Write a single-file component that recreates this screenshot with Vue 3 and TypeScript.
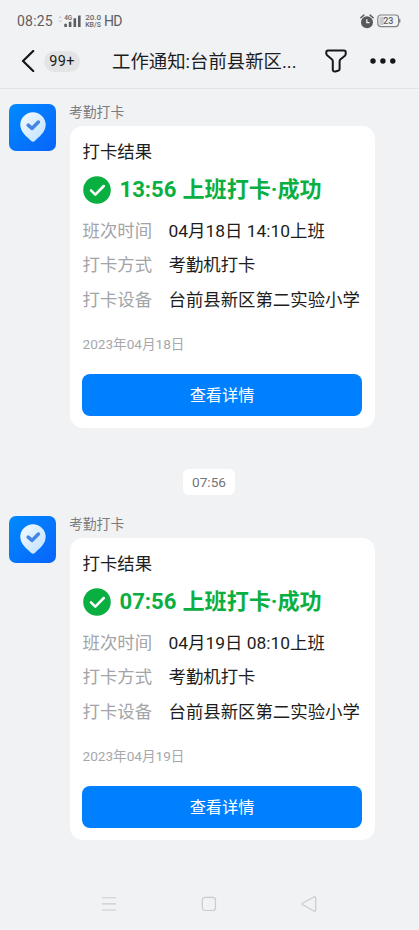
<script setup lang="ts">
interface Field {
  label: string
  value: string
}

interface Notice {
  id: number
  sender: string
  time: string
  fields: Field[]
  date: string
}

const notices: Notice[] = [
  {
    id: 1,
    sender: '考勤打卡',
    time: '13:56',
    fields: [
      { label: '班次时间', value: '04月18日 14:10上班' },
      { label: '打卡方式', value: '考勤机打卡' },
      { label: '打卡设备', value: '台前县新区第二实验小学' },
    ],
    date: '2023年04月18日',
  },
  {
    id: 2,
    sender: '考勤打卡',
    time: '07:56',
    fields: [
      { label: '班次时间', value: '04月19日 08:10上班' },
      { label: '打卡方式', value: '考勤机打卡' },
      { label: '打卡设备', value: '台前县新区第二实验小学' },
    ],
    date: '2023年04月19日',
  },
]
</script>

<template>
  <div class="screen">
    <div class="status">
      <span class="clock">08:25</span>
      <svg class="signal" width="44" height="16" viewBox="0 0 44 16">
        <path d="M1 5.2L2.3 3.5L3.6 5.2M1 7.4L2.3 9L3.6 7.4" fill="none" stroke="#c2c3c5" stroke-width="1" />
        <text x="6.2" y="7.2" class="tiny" textLength="8" lengthAdjust="spacingAndGlyphs">4G</text>
        <path d="M7.6 10.7v3.3M12.1 8.8v5.2M16.8 5.2v8.8M21.3 2.4v11.6" stroke="#5d5e61" stroke-width="2.6" />
        <text x="27.2" y="7.2" class="tiny" textLength="15.8" lengthAdjust="spacingAndGlyphs">20.0</text>
        <text x="27.2" y="14" class="tiny" textLength="15.8" lengthAdjust="spacingAndGlyphs">KB/S</text>
      </svg>
      <span class="hd">HD</span>
      <svg class="alarm" width="14" height="15" viewBox="0 0 14 15">
        <circle cx="7" cy="8.2" r="6" fill="#58595c" />
        <path d="M.8 3.8L3.9 1.1M13.2 3.8L10.1 1.1" stroke="#58595c" stroke-width="1.4" stroke-linecap="round" />
        <path d="M6.8 5.2v3.5H9.6" fill="none" stroke="#f1f2f4" stroke-width="1.3" />
      </svg>
      <svg class="battery" width="24" height="14" viewBox="0 0 24 14">
        <rect x=".8" y="1" width="20.8" height="11.6" rx="3" fill="none" stroke="#818285" stroke-width="1.2" />
        <rect x="2.5" y="2.7" width="4.2" height="8.2" rx="1" fill="#c9cacd" />
        <path d="M22.7 5v3.6" stroke="#818285" stroke-width="1.4" />
        <text x="11.3" y="10" text-anchor="middle" class="level">23</text>
      </svg>
    </div>

    <header class="nav">
      <svg class="back" width="14" height="22" viewBox="0 0 14 22">
        <path d="M12.2 1L2 11L12.2 21" fill="none" stroke="#151619" stroke-width="2.2" stroke-linecap="round" stroke-linejoin="round" />
      </svg>
      <span class="unread">99+</span>
      <h1 class="title">工作通知:台前县新区...</h1>
      <svg class="filter" width="22" height="24" viewBox="0 0 22 24">
        <path d="M3 1.4H19Q20.7 1.4 20.7 3V5Q20.7 6 19.9 6.8L15.6 10.2Q14.6 11 14.6 12.3V20Q14.6 21 13.7 21.5L10.3 22.5Q7.8 22.9 7.8 20.8V12.3Q7.8 11 6.8 10.2L2.1 6.3Q1.3 5.6 1.3 4.6V3Q1.3 1.4 3 1.4Z" fill="none" stroke="#17181b" stroke-width="2" stroke-linejoin="round" />
      </svg>
      <svg class="more" width="28" height="6" viewBox="0 0 28 6">
        <g fill="#151619">
          <circle cx="3" cy="3" r="2.7" />
          <circle cx="12.9" cy="3" r="2.7" />
          <circle cx="22.8" cy="3" r="2.7" />
        </g>
      </svg>
    </header>

    <main class="chat">
      <template v-for="(notice, index) in notices" :key="notice.id">
        <div v-if="index > 0" class="divider">
          <span class="pill">{{ notice.time }}</span>
        </div>
        <section class="message">
          <div class="avatar">
            <svg width="26" height="31" viewBox="0 0 26 31">
              <defs>
                <linearGradient :id="`pin-${notice.id}`" x1="0" y1="0" x2="1" y2="1">
                  <stop offset="0" stop-color="#f5fcff" />
                  <stop offset="1" stop-color="#bce0ff" />
                </linearGradient>
              </defs>
              <path d="M13 .3C6 .3.3 5.9.3 12.8C.3 20.6 7.4 25.2 11.2 28.9Q13 30.5 14.8 28.9C18.6 25.2 25.7 20.6 25.7 12.8C25.7 5.9 20 .3 13 .3Z" :fill="`url(#pin-${notice.id})`" />
              <path d="M8.2 13.1L12 16.4L18.4 10.1" fill="none" stroke="#4685e3" stroke-width="3.5" stroke-linecap="round" stroke-linejoin="round" />
            </svg>
          </div>
          <div class="body">
            <div class="sender">{{ notice.sender }}</div>
            <article class="card">
              <h2 class="heading">打卡结果</h2>
              <div class="result">
                <svg width="28" height="28" viewBox="0 0 28 28">
                  <circle cx="14" cy="14" r="13.8" fill="#0aaf42" />
                  <path d="M8 14.4L12.3 18.6L20.8 10" fill="none" stroke="#fff" stroke-width="2.5" stroke-linecap="round" stroke-linejoin="round" />
                </svg>
                <strong><span class="hour">{{ notice.time }}</span>上班打卡·成功</strong>
              </div>
              <dl class="fields">
                <div v-for="field in notice.fields" :key="field.label" class="field">
                  <dt>{{ field.label }}</dt>
                  <dd>{{ field.value }}</dd>
                </div>
              </dl>
              <div class="date">{{ notice.date }}</div>
              <button class="action" type="button">查看详情</button>
            </article>
          </div>
        </section>
      </template>
    </main>

    <footer class="system">
      <svg width="16" height="16" viewBox="0 0 16 16">
        <path d="M1 1.8h14M1 7.9h14M1 14h14" stroke="#c9cbce" stroke-width="1.1" />
      </svg>
      <svg width="16" height="16" viewBox="0 0 16 16">
        <rect x="1.3" y="1.3" width="13.2" height="13.2" rx="2.8" fill="none" stroke="#c9cbce" stroke-width="1.2" />
      </svg>
      <svg width="16" height="16" viewBox="0 0 16 16">
        <path d="M1.8 7.1L12.9 .9Q14.7 .1 14.7 2V13.8Q14.7 15.8 12.9 14.9L1.8 8.7Q.5 7.9 1.8 7.1Z" fill="none" stroke="#c9cbce" stroke-width="1.2" stroke-linejoin="round" />
      </svg>
    </footer>
  </div>
</template>

<style>
body {
  background: #f1f2f4;
}
</style>

<style scoped>
.screen {
  display: flex;
  flex-direction: column;
  box-sizing: border-box;
  height: 930px;
  overflow: hidden;
  background: #f1f2f4;
  color: #1c1d20;
  font-family: Roboto, "Noto Sans CJK SC", sans-serif;
}

svg {
  display: block;
  flex: none;
}

.status {
  display: flex;
  align-items: center;
  box-sizing: border-box;
  height: 34px;
  padding: 8px 18px 0 17px;
  color: #5d5e61;
  font-size: 14px;
}

.clock {
  width: 41px;
  letter-spacing: 0.2px;
}

.hd {
  margin-left: 2px;
  letter-spacing: -0.8px;
}

.tiny {
  font-size: 7px;
  font-weight: 500;
  fill: #66676a;
}

.level {
  font-size: 9px;
  font-weight: 500;
  fill: #606164;
}

.alarm {
  margin-left: auto;
}

.battery {
  margin-left: 3px;
}

.nav {
  display: flex;
  align-items: center;
  box-sizing: border-box;
  height: 55px;
  padding: 0 21px;
  border-bottom: 1px solid #e2e3e6;
}

.unread {
  display: flex;
  align-items: center;
  justify-content: center;
  width: 36px;
  height: 21px;
  margin-left: 9px;
  border-radius: 11px;
  background: #e3e4e6;
  font-size: 14.5px;
  letter-spacing: 0.3px;
}

.title {
  flex: none;
  width: 213px;
  margin: 1px 0 0 32px;
  font-size: 18.4px;
  font-weight: 400;
  line-height: 28px;
  white-space: nowrap;
}

.more {
  margin-left: 23px;
}

.chat {
  flex: 1;
  padding: 15px 9px 0;
}

.message {
  display: flex;
  gap: 14px;
}

.avatar {
  display: flex;
  align-items: center;
  justify-content: center;
  width: 47px;
  height: 47px;
  border-radius: 7px;
  background: linear-gradient(135deg, #008aff, #0864fa);
}

.sender {
  height: 22px;
  margin-left: -1px;
  color: #7b7c7f;
  font-size: 13.8px;
  line-height: 16px;
}

.card {
  box-sizing: border-box;
  width: 305px;
  height: 302px;
  padding: 13px 12.5px 0;
  border-radius: 13px;
  background: #fff;
}

.heading {
  margin: 0;
  font-size: 17.4px;
  font-weight: 400;
  line-height: 26px;
}

.result {
  display: flex;
  align-items: center;
  gap: 9px;
  height: 28px;
  margin-top: 11px;
  color: #0aaf42;
  font-size: 22.1px;
  line-height: 28px;
  white-space: nowrap;
}

.result strong {
  margin-top: -2px;
}

.hour {
  margin-right: 6px;
}

.fields {
  margin: 10px 0 0;
}

.field {
  display: flex;
  height: 34.4px;
  font-size: 17.4px;
  line-height: 34.4px;
  white-space: nowrap;
}

.field dt {
  width: 86px;
  color: #a3a4a7;
}

.field dd {
  margin: 0;
}

.date {
  margin-top: 16px;
  color: #a7a8ab;
  font-size: 13.6px;
  line-height: 22px;
}

.action {
  display: block;
  width: 280px;
  height: 42px;
  margin: 19px 0 0 -0.5px;
  padding: 1px 0 0;
  border: 0;
  border-radius: 8px;
  background: #0080ff;
  color: #fff;
  font-family: inherit;
  font-size: 16.2px;
  line-height: 41px;
}

.divider {
  display: flex;
  justify-content: center;
  padding: 41px 1px 21px 0;
}

.pill {
  width: 52px;
  height: 26px;
  border-radius: 6px;
  background: #fff;
  color: #737477;
  font-size: 13.6px;
  line-height: 27px;
  text-align: center;
}

.system {
  display: flex;
  gap: 84px;
  padding: 0 0 18px 101px;
}
</style>
